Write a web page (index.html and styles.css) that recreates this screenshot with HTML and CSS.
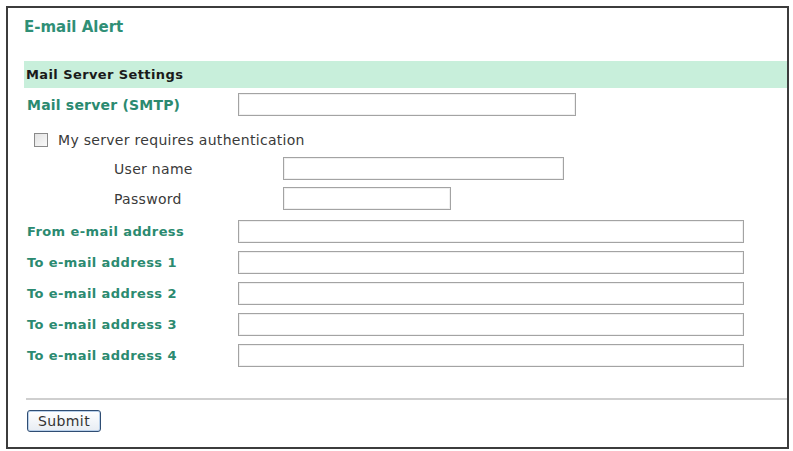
FILE: index.html
```html
<html>
   <head>
      <meta charset="UTF-8">
      <title>E-mail Alert</title>
      <link rel="stylesheet" href="styles.css">
   </head>
   <body>
      <div class="frame">
         <h1 class="page__title">E-mail Alert</h1>
         <div class="section__head">Mail Server Settings</div>
         <form class="mail__form" onsubmit="return false">
            <div class="row row--smtp">
               <label class="label" for="smtp">Mail server (SMTP)</label>
               <input class="field field--smtp" type="text" id="smtp">
            </div>
            <div class="row row--check">
               <input class="check" type="checkbox" id="auth">
               <label class="check__text" for="auth">My server requires authentication</label>
            </div>
            <div class="row row--sub">
               <label class="sublabel" for="user">User name</label>
               <input class="field field--user" type="text" id="user">
            </div>
            <div class="row row--sub row--pass">
               <label class="sublabel" for="pass">Password</label>
               <input class="field field--pass" type="password" id="pass">
            </div>
            <div class="mail__list">
               <div class="row">
                  <label class="label" for="from">From e-mail address</label>
                  <input class="field field--mail" type="text" id="from">
               </div>
               <div class="row">
                  <label class="label" for="to1">To e-mail address 1</label>
                  <input class="field field--mail" type="text" id="to1">
               </div>
               <div class="row">
                  <label class="label" for="to2">To e-mail address 2</label>
                  <input class="field field--mail" type="text" id="to2">
               </div>
               <div class="row">
                  <label class="label" for="to3">To e-mail address 3</label>
                  <input class="field field--mail" type="text" id="to3">
               </div>
               <div class="row">
                  <label class="label" for="to4">To e-mail address 4</label>
                  <input class="field field--mail" type="text" id="to4">
               </div>
            </div>
            <div class="divider"></div>
            <button class="btn__submit" type="submit">Submit</button>
         </form>
      </div>
   </body>
</html>
```

FILE: styles.css
```css
* {
  box-sizing: border-box;
}
body {
    margin: 0;
    background-color: #fff;
    color: #222;
    font-family: "DejaVu Sans", Verdana, sans-serif;
}
/* Outer frame */
.frame {
    margin: 6px 4px 0 6px;
    height: 443px;
    border: 2px solid #3c3c3c;
    padding: 11px 0 0 16px;
}
.page__title {
    margin: 0;
    height: 16px;
    line-height: 16px;
    font-size: 15px;
    font-weight: bold;
    color: #2f8f76;
}
/* Green section band */
.section__head {
    margin-top: 26px;
    height: 27px;
    line-height: 27px;
    padding-left: 2px;
    background-color: #c8efdb;
    font-size: 13px;
    letter-spacing: 0.4px;
    font-weight: bold;
    color: #1a1a1a;
}
.mail__form {
    margin: 0;
}
.row {
    display: flex;
    align-items: center;
    height: 23px;
}
.row--smtp {
    margin-top: 5px;
}
.row--check {
    margin-top: 12px;
    padding-left: 10px;
}
.row--sub {
    margin-top: 6px;
}
.row--pass {
    margin-top: 7px;
}
.label {
    width: 214px;
    padding-left: 3px;
    font-size: 13px;
    letter-spacing: 0.4px;
    font-weight: bold;
    color: #2b8a70;
}
.row--smtp .label {
    font-size: 14px;
    letter-spacing: 0.2px;
}
.sublabel {
    width: 259px;
    padding-left: 90px;
    font-size: 14px;
    letter-spacing: 0.3px;
    color: #3a3a3a;
}
/* Text inputs */
.field {
    height: 23px;
    margin: 0;
    border: 1px solid #a3a3a3;
    box-shadow: inset 0 0 0 1px #f0f0f0;
    background-color: #fff;
    font-size: 12px;
}
.field--smtp {
    width: 338px;
}
.field--user {
    width: 281px;
}
.field--pass {
    width: 168px;
}
.field--mail {
    width: 506px;
}
.mail__list {
    display: flex;
    flex-direction: column;
    gap: 8px;
    margin-top: 10px;
}
/* Checkbox */
.check {
    -webkit-appearance: none;
    appearance: none;
    margin: 1px 10px 0 0;
    width: 14px;
    height: 14px;
    border: 1px solid #8a8a8a;
    background: linear-gradient(135deg, #e2e2e2, #fafafa);
}
.check:checked {
    background: #fafafa;
}
.check__text {
    font-size: 14px;
    letter-spacing: 0.3px;
    color: #3a3a3a;
}
.divider {
    margin: 31px 0 0 2px;
    height: 2px;
    background-color: #cfcfcf;
}
/* Style the "Submit" button */
.btn__submit {
    margin: 10px 0 0 3px;
    width: 74px;
    height: 22px;
    padding: 0;
    border: 1px solid #2f4d73;
    border-radius: 3px;
    background: linear-gradient(#ffffff, #e7ecf3);
    box-shadow: inset 0 0 0 1px #b9d0ea;
    font-family: "DejaVu Sans", Verdana, sans-serif;
    font-size: 14px;
    letter-spacing: 0.4px;
    color: #333;
}
```
